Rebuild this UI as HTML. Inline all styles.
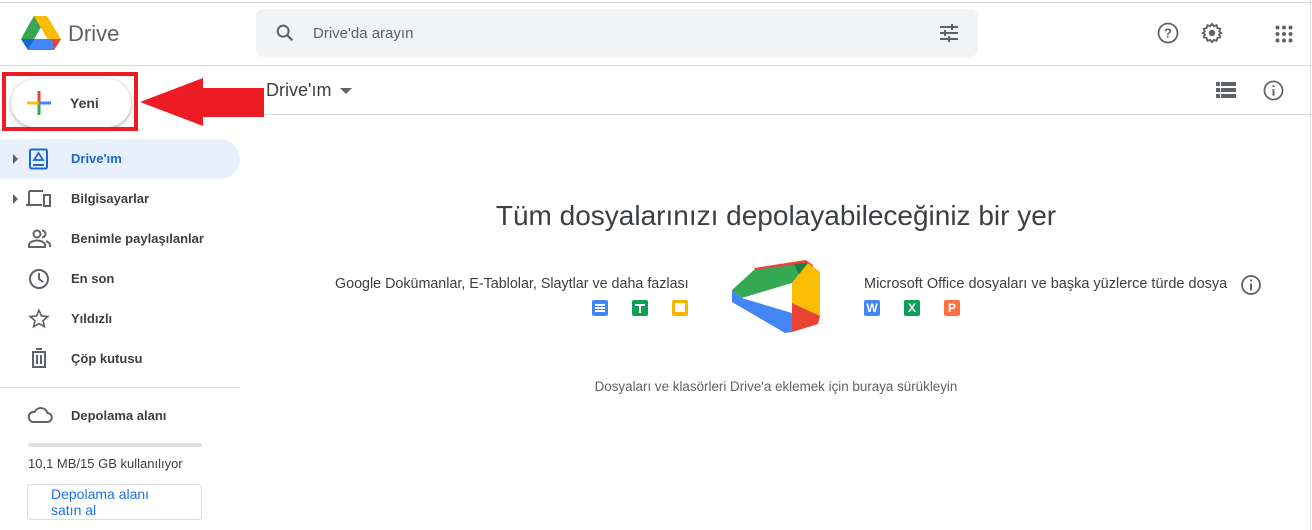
<!DOCTYPE html>
<html><head><meta charset="utf-8"><style>
*{margin:0;padding:0;box-sizing:border-box}
body{width:1312px;height:530px;overflow:hidden;background:#fff;font-family:"Liberation Sans",Arial,sans-serif;color:#3c4043;position:relative}
.a{position:absolute}
.nav{position:absolute;left:71px;font-size:13px;font-weight:bold;color:#3c4043}
.ic{position:absolute;left:28px}
</style></head><body>
<div class="a" style="left:0;top:2px;width:1312px;height:1px;background:#dadce0"></div>
<div class="a" style="left:0;top:65px;width:1312px;height:1px;background:#dadce0"></div>
<div class="a" style="left:1310px;top:0;width:1px;height:530px;background:#dadce0"></div>
<!-- logo -->
<svg class="a" style="left:21px;top:16px" width="40" height="34" viewBox="0 0 40 34">
<polygon points="13,0 26,0 13,22 6,22" fill="#188038"/>
<polygon points="13,0 6,12 0,23 7,34 20,11" fill="#34a853"/>
<polygon points="26,0 13,0 33,34 40,23" fill="#fbbc04"/>
<polygon points="7,34 33,34 40,23 13,23" fill="#4285f4"/>
<polygon points="0,23 7,34 13,23" fill="#1967d2"/>
<polygon points="33,34 40,23 31,23" fill="#ea4335"/>
</svg>
<div class="a" style="left:68px;top:21px;font-size:22px;color:#5f6368">Drive</div>
<!-- search -->
<div class="a" style="left:256px;top:9px;width:722px;height:48px;background:#f1f3f4;border-radius:8px"></div>
<svg class="a" style="left:274px;top:22px" width="22" height="22" viewBox="0 0 24 24"><circle cx="10" cy="10" r="6" fill="none" stroke="#5f6368" stroke-width="2.2"/><line x1="14.5" y1="14.5" x2="20" y2="20" stroke="#5f6368" stroke-width="2.4"/></svg>
<div class="a" style="left:313px;top:25px;font-size:15px;color:#5f6368">Drive'da arayın</div>
<svg class="a" style="left:938px;top:23px" width="22" height="20" viewBox="0 0 22 20"><g stroke="#5f6368" stroke-width="2"><line x1="2" y1="4" x2="20" y2="4"/><line x1="2" y1="10" x2="20" y2="10"/><line x1="2" y1="16" x2="20" y2="16"/><line x1="14" y1="1" x2="14" y2="7"/><line x1="7" y1="7" x2="7" y2="13"/><line x1="11" y1="13" x2="11" y2="19"/></g></svg>
<!-- top right -->
<svg class="a" style="left:1157px;top:22px" width="22" height="22" viewBox="0 0 22 22"><circle cx="11" cy="11" r="9.5" fill="none" stroke="#5f6368" stroke-width="1.8"/><text x="11" y="15.5" font-size="13" font-weight="bold" text-anchor="middle" fill="#5f6368" font-family="Liberation Sans">?</text></svg>
<svg class="a" style="left:1201px;top:22px" width="22" height="22" viewBox="0 0 24 24"><path d="M12 2l2 2.5 3-1 .8 3.1 3.1.8-1 3L22 12l-2.1 1.6 1 3-3.1.8-.8 3.1-3-1L12 22l-2-2.5-3 1-.8-3.1-3.1-.8 1-3L2 12l2.1-1.6-1-3 3.1-.8.8-3.1 3 1z" fill="none" stroke="#5f6368" stroke-width="2"/><circle cx="12" cy="12" r="3.5" fill="#5f6368"/></svg>
<svg class="a" style="left:1275px;top:25px" width="18" height="18" viewBox="0 0 18 18" fill="#5f6368"><circle cx="2.5" cy="2.5" r="2"/><circle cx="9" cy="2.5" r="2"/><circle cx="15.5" cy="2.5" r="2"/><circle cx="2.5" cy="9" r="2"/><circle cx="9" cy="9" r="2"/><circle cx="15.5" cy="9" r="2"/><circle cx="2.5" cy="15.5" r="2"/><circle cx="9" cy="15.5" r="2"/><circle cx="15.5" cy="15.5" r="2"/></svg>
<!-- header -->
<div class="a" style="left:256px;top:114px;width:1056px;height:1px;background:#dadce0"></div>
<div class="a" style="left:266px;top:80px;font-size:18px;color:#3c4043">Drive'ım</div>
<div class="a" style="left:340px;top:88px;width:0;height:0;border-left:6px solid transparent;border-right:6px solid transparent;border-top:6px solid #5f6368"></div>
<svg class="a" style="left:1216px;top:82px" width="20" height="16" viewBox="0 0 20 16" fill="#5f6368"><rect x="0" y="0" width="4" height="4"/><rect x="5" y="0" width="15" height="4"/><rect x="0" y="6" width="4" height="4"/><rect x="5" y="6" width="15" height="4"/><rect x="0" y="12" width="4" height="4"/><rect x="5" y="12" width="15" height="4"/></svg>
<svg class="a" style="left:1263px;top:80px" width="21" height="21" viewBox="0 0 22 22"><circle cx="11" cy="11" r="9.5" fill="none" stroke="#5f6368" stroke-width="1.8"/><rect x="10" y="9.5" width="2" height="7" fill="#5f6368"/><rect x="10" y="5.5" width="2" height="2" fill="#5f6368"/></svg>
<!-- Yeni -->
<div class="a" style="left:11px;top:79px;width:120px;height:48px;border-radius:24px;background:#fff;box-shadow:0 1px 3px rgba(60,64,67,.35),0 2px 6px rgba(60,64,67,.15)"></div>
<svg class="a" style="left:27px;top:91px" width="24" height="24" viewBox="0 0 24 24"><rect x="10.5" y="0" width="3" height="12" fill="#ea4335"/><rect x="12" y="10.5" width="12" height="3" fill="#4285f4"/><rect x="10.5" y="12" width="3" height="12" fill="#34a853"/><rect x="0" y="10.5" width="12" height="3" fill="#fbbc04"/></svg>
<div class="a" style="left:70px;top:95px;font-size:14px;font-weight:bold;color:#3c4043">Yeni</div>
<div class="a" style="left:2px;top:72px;width:136px;height:59px;border:4px solid #ed1c24"></div>
<svg class="a" style="left:138px;top:76px" width="126" height="52" viewBox="0 0 126 52"><polygon points="2,26 65,2 65,12 126,12 126,41 65,41 65,50" fill="#ed1c24"/></svg>
<!-- sidebar -->
<div class="a" style="left:0;top:139px;width:240px;height:40px;background:#e8f0fe;border-radius:0 20px 20px 0"></div>
<div class="a" style="left:13px;top:154px;border-top:5px solid transparent;border-bottom:5px solid transparent;border-left:5px solid #5f6368"></div>
<div class="a" style="left:13px;top:194px;border-top:5px solid transparent;border-bottom:5px solid transparent;border-left:5px solid #5f6368"></div>
<svg class="ic" style="top:148px" width="22" height="22" viewBox="0 0 22 22"><rect x="2" y="1.5" width="17" height="19" rx="1.5" fill="none" stroke="#1967d2" stroke-width="2"/><line x1="5" y1="17" x2="16" y2="17" stroke="#1967d2" stroke-width="2"/><polygon points="10.5,5 15,12 6,12" fill="none" stroke="#1967d2" stroke-width="1.8"/></svg>
<div class="nav" style="top:151px;color:#1967d2">Drive'ım</div>
<svg class="ic" style="top:189px;left:26px" width="26" height="20" viewBox="0 0 26 20"><path d="M3 2h14M3 2v13M0 16h16" stroke="#5f6368" stroke-width="2" fill="none"/><rect x="18" y="6" width="6" height="11" fill="none" stroke="#5f6368" stroke-width="2"/></svg>
<div class="nav" style="top:191px">Bilgisayarlar</div>
<svg class="ic" style="top:229px" width="24" height="20" viewBox="0 0 24 20"><circle cx="9" cy="5" r="3.5" fill="none" stroke="#5f6368" stroke-width="2"/><path d="M1 18v-2c0-3 5-4.5 8-4.5s8 1.5 8 4.5v2z" fill="none" stroke="#5f6368" stroke-width="2"/><path d="M14 1.5a3.5 3.5 0 0 1 0 7M18 12c2 .8 4 2 4 4v2" fill="none" stroke="#5f6368" stroke-width="2"/></svg>
<div class="nav" style="top:231px">Benimle paylaşılanlar</div>
<svg class="ic" style="top:268px" width="22" height="22" viewBox="0 0 22 22"><circle cx="11" cy="11" r="9" fill="none" stroke="#5f6368" stroke-width="2"/><path d="M11 5v6l4 3" fill="none" stroke="#5f6368" stroke-width="2"/></svg>
<div class="nav" style="top:271px">En son</div>
<svg class="ic" style="top:308px" width="22" height="22" viewBox="0 0 24 24"><path d="M12 2.5l2.8 6.2 6.7.6-5.1 4.5 1.5 6.6L12 17l-5.9 3.4 1.5-6.6-5.1-4.5 6.7-.6z" fill="none" stroke="#5f6368" stroke-width="1.8"/></svg>
<div class="nav" style="top:311px">Yıldızlı</div>
<svg class="ic" style="top:347px" width="22" height="22" viewBox="0 0 22 22"><path d="M4 5h14M8 2h6M5 5v15h12V5M9 8v9M13 8v9" fill="none" stroke="#5f6368" stroke-width="2"/></svg>
<div class="nav" style="top:351px">Çöp kutusu</div>
<div class="a" style="left:0;top:387px;width:240px;height:1px;background:#dadce0"></div>
<svg class="ic" style="top:406px;left:27px" width="26" height="18" viewBox="0 0 26 18"><path d="M6 16h14a4.5 4.5 0 0 0 .5-9A7 7 0 0 0 7.5 6 5 5 0 0 0 6 16z" fill="none" stroke="#5f6368" stroke-width="2"/></svg>
<div class="nav" style="top:408px">Depolama alanı</div>
<div class="a" style="left:28px;top:443px;width:174px;height:4px;background:#e0e0e0;border-radius:2px"></div>
<div class="a" style="left:28px;top:456px;font-size:13px;color:#3c4043">10,1 MB/15 GB kullanılıyor</div>
<div class="a" style="left:27px;top:484px;width:175px;height:36px;border:1px solid #dadce0;border-radius:4px"></div>
<div class="a" style="left:51px;top:486px;font-size:14px;line-height:16px;color:#1a73e8">Depolama alanı<br>satın al</div>
<!-- center -->
<div class="a" style="left:228px;top:200px;width:1096px;text-align:center;font-size:28px;color:#3c4043">Tüm dosyalarınızı depolayabileceğiniz bir yer</div>
<div class="a" style="left:335px;top:276px;font-size:14.3px;color:#3c4043">Google Dokümanlar, E-Tablolar, Slaytlar ve daha fazlası</div>
<div class="a" style="left:592px;top:300px;width:16px;height:16px;background:#4285f4;border-radius:2px"></div>
<div class="a" style="left:595px;top:304px;width:10px;height:2px;background:#fff;box-shadow:0 3px 0 #fff,0 6px 0 #fff"></div>
<div class="a" style="left:632px;top:300px;width:16px;height:16px;background:#0f9d58;border-radius:2px"></div>
<div class="a" style="left:635px;top:304px;width:10px;height:2px;background:#fff"></div>
<div class="a" style="left:639px;top:304px;width:2px;height:9px;background:#fff"></div>
<div class="a" style="left:672px;top:300px;width:16px;height:16px;background:#f4b400;border-radius:2px"></div>
<div class="a" style="left:675px;top:303px;width:10px;height:9px;background:#fff"></div>
<svg class="a" style="left:730px;top:258px" width="92" height="76" viewBox="0 0 92 76">
<polygon points="24,10 76,2 84,8 26,14" fill="#ea4335"/>
<polygon points="2,32 24,12 78,5 62,25 12,40" fill="#34a853"/>
<polygon points="64,6 78,5 90,14 70,18" fill="#188038"/>
<polygon points="78,5 90,14 90,58 62,45 62,25" fill="#fbbc04"/>
<polygon points="62,45 90,58 88,66 62,74" fill="#ea4335"/>
<polygon points="2,32 12,40 62,55 62,74 55,75 2,44" fill="#4285f4"/>
<polygon points="12,40 62,25 62,55" fill="#fff"/>
</svg>
<div class="a" style="left:864px;top:276px;font-size:14.5px;color:#3c4043">Microsoft Office dosyaları ve başka yüzlerce türde dosya</div>
<svg class="a" style="left:1240px;top:274px" width="22" height="22" viewBox="0 0 22 22"><circle cx="11" cy="11" r="9" fill="none" stroke="#5f6368" stroke-width="1.8"/><rect x="10" y="9.5" width="2" height="7" fill="#5f6368"/><rect x="10" y="5.5" width="2" height="2" fill="#5f6368"/></svg>
<div class="a" style="left:864px;top:300px;width:16px;height:16px;background:#4285f4;border-radius:2px;color:#fff;font-size:12px;font-weight:bold;text-align:center;line-height:16px">W</div>
<div class="a" style="left:904px;top:300px;width:16px;height:16px;background:#0f9d58;border-radius:2px;color:#fff;font-size:12px;font-weight:bold;text-align:center;line-height:16px">X</div>
<div class="a" style="left:944px;top:300px;width:16px;height:16px;background:#ff7043;border-radius:2px;color:#fff;font-size:12px;font-weight:bold;text-align:center;line-height:16px">P</div>
<div class="a" style="left:256px;top:379px;width:1040px;text-align:center;font-size:13.4px;color:#5f6368">Dosyaları ve klasörleri Drive'a eklemek için buraya sürükleyin</div>
</body></html>
